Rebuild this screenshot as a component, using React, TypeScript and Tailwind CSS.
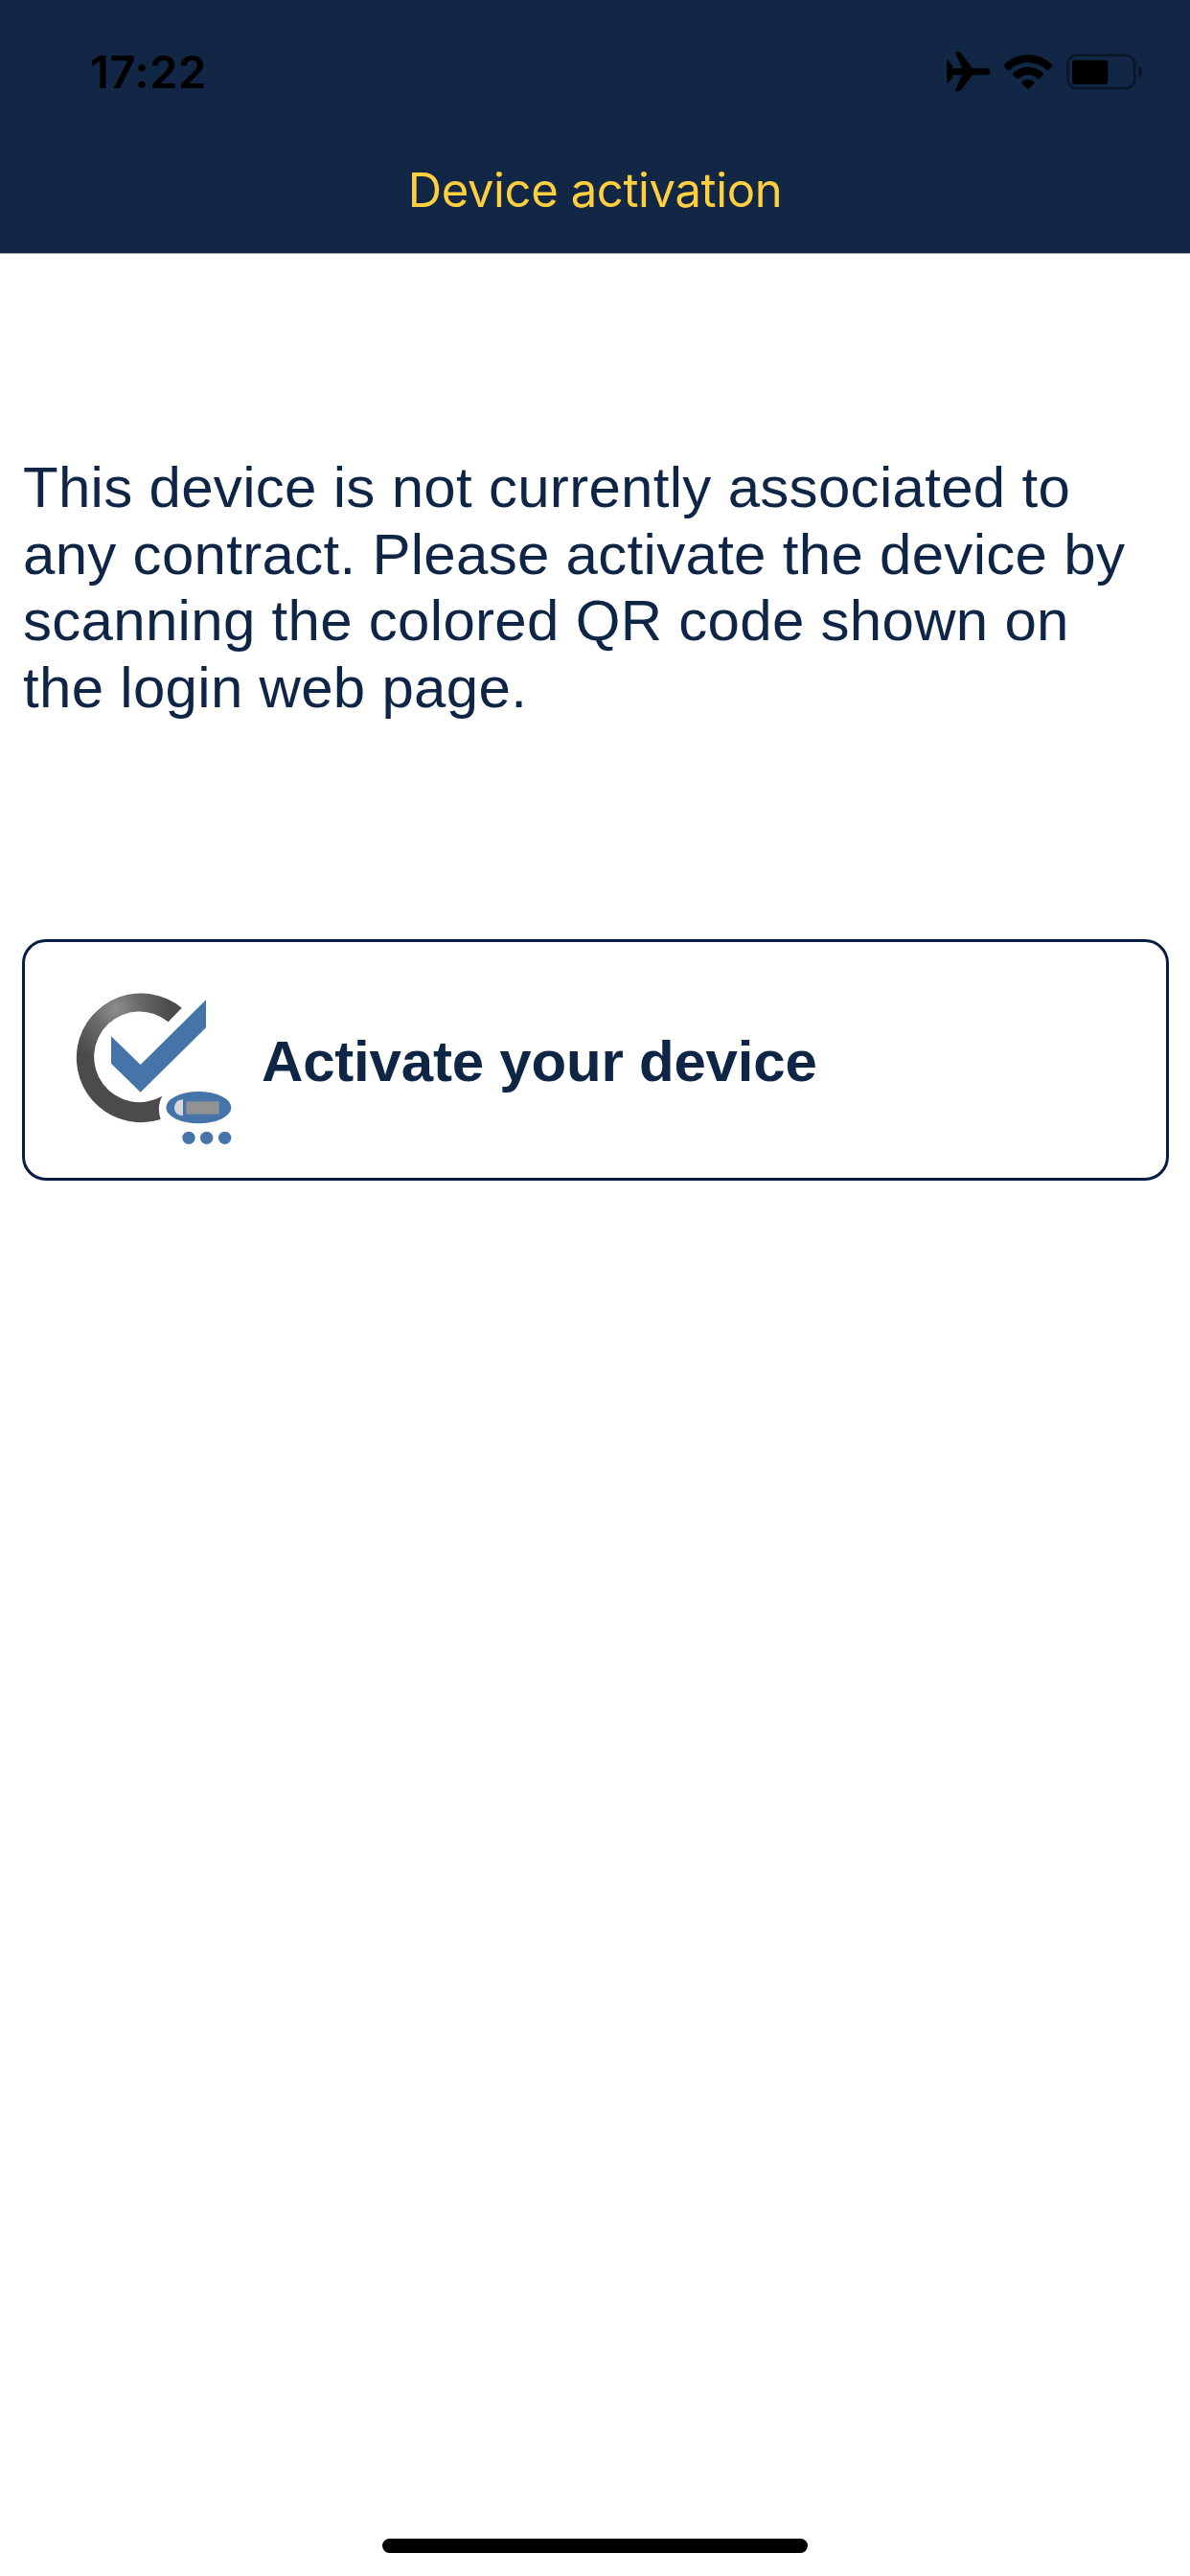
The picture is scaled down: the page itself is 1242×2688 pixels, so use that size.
function AirplaneIcon() {
  return (
    <svg className="h-[42px] w-[46px]" viewBox="0 0 138 126" fill="#000">
      <path d="M1 27 H5 L19 45 V52 H49 L27 4 Q26 1 30 1 H38 Q42 1 44 4 L81 52 H127 Q136 53 136 62.5 Q136 72 127 73 H81 L44 121 Q42 124 38 124 H30 Q26 124 27 121 L49 73 H19 V80 L5 97 H1 Z" />
    </svg>
  )
}

function WifiIcon() {
  return (
    <svg className="h-[38px] w-[52px]" viewBox="0 0 156 114" fill="#000">
      <path d="M3 40 Q0 37 3 34 Q36 3 78 3 Q120 3 153 34 Q156 37 153 40 L142 51 Q139 54 136 51 Q110 28 78 28 Q46 28 20 51 Q17 54 14 51 Z" />
      <path d="M31 67 Q28 64 31 61 Q52 41 78 41 Q104 41 125 61 Q128 64 125 67 L114 78 Q111 80 108 78 Q94 66 78 66 Q62 66 48 78 Q45 80 42 78 Z" />
      <path d="M58 93 Q56 90 59 88 Q68 80 78 80 Q88 80 97 88 Q100 90 98 93 L80 110 Q78 112 76 110 Z" />
    </svg>
  )
}

function BatteryIcon() {
  return (
    <svg className="h-[38px] w-[80px]" viewBox="0 0 240 114" fill="none">
      <rect x="4.5" y="5" width="209" height="103" rx="27" stroke="#000" strokeOpacity="0.4" strokeWidth="8" />
      <rect x="18" y="20" width="112" height="76" rx="10" fill="#000" />
      <path d="M226 39 Q238 44 238 57 Q238 70 226 75 Z" fill="#000" fillOpacity="0.5" />
    </svg>
  )
}

function ActivateIcon() {
  return (
    <svg className="mt-[17px] h-[162px] w-[164px] shrink-0" viewBox="234 222 492 486">
      <defs>
        <radialGradient id="ring" gradientUnits="userSpaceOnUse" cx="362" cy="278" r="170">
          <stop offset="0" stopColor="#8e8d8d" />
          <stop offset="0.45" stopColor="#6a6868" />
          <stop offset="1" stopColor="#4d4a4b" />
        </radialGradient>
      </defs>
      <path
        d="M569 275 A202 202 0 1 0 503 624 Q490 584 508 551 A142 142 0 1 1 527 319 Z"
        fill="url(#ring)"
      />
      <path d="M348 364 L440 453 L645 250 V337 L440 539 L348 449 Z" fill="#4575a8" />
      <ellipse cx="622" cy="587" rx="102" ry="50" fill="#4575a8" />
      <path d="M573 562 V613 Q546 611 546 587.500 Q546 564 573 562 Z" fill="#d5d8dc" />
      <rect x="583" y="568" width="103" height="40" fill="#929292" />
      <g fill="#4575a8">
        <circle cx="591" cy="682" r="20" />
        <circle cx="647" cy="682" r="20" />
        <circle cx="704" cy="682" r="20" />
      </g>
    </svg>
  )
}

export default function App() {
  return (
    <div className="flex h-[2688px] w-[1242px] flex-col bg-white font-['Liberation_Sans',sans-serif] text-[#0f2546]">
      <header className="flex h-[265px] flex-col border-b border-[#a3a5ab] bg-[#122645] font-['Inter',sans-serif]">
        <div className="flex h-[150px] items-center justify-between pr-[49px] pl-[94px]">
          <span className="text-[47px] leading-[60px] font-semibold tracking-[0.6px] text-black">17:22</span>
          <div className="flex items-center">
            <AirplaneIcon />
            <div className="ml-[13px]">
              <WifiIcon />
            </div>
            <div className="ml-[14px]">
              <BatteryIcon />
            </div>
          </div>
        </div>
        <h1 className="mt-[19px] text-center text-[49px] leading-[60px] font-normal tracking-[-0.4px] text-[#ffcf3f]">
          Device activation
        </h1>
      </header>

      <main className="flex flex-col px-[23px]">
        <p className="mt-[209px] pl-px text-[60px] leading-[69.5px] tracking-[0.3px] whitespace-nowrap">
          This device is not currently associated to
          <br />
          any contract. Please activate the device by
          <br />
          scanning the colored QR code shown on
          <br />
          the login web page.
        </p>

        <button className="mt-[228px] flex h-[252px] w-[1197px] items-center rounded-[25px] border-3 border-[#071d45] pl-[52px] text-left">
          <ActivateIcon />
          <span className="mt-[4px] ml-[31px] text-[60px] leading-[70px] font-bold tracking-[-0.2px]">
            Activate your device
          </span>
        </button>
      </main>

      <div className="mx-auto mt-auto mb-[24px] h-[15px] w-[444px] rounded-full bg-black" />
    </div>
  )
}
